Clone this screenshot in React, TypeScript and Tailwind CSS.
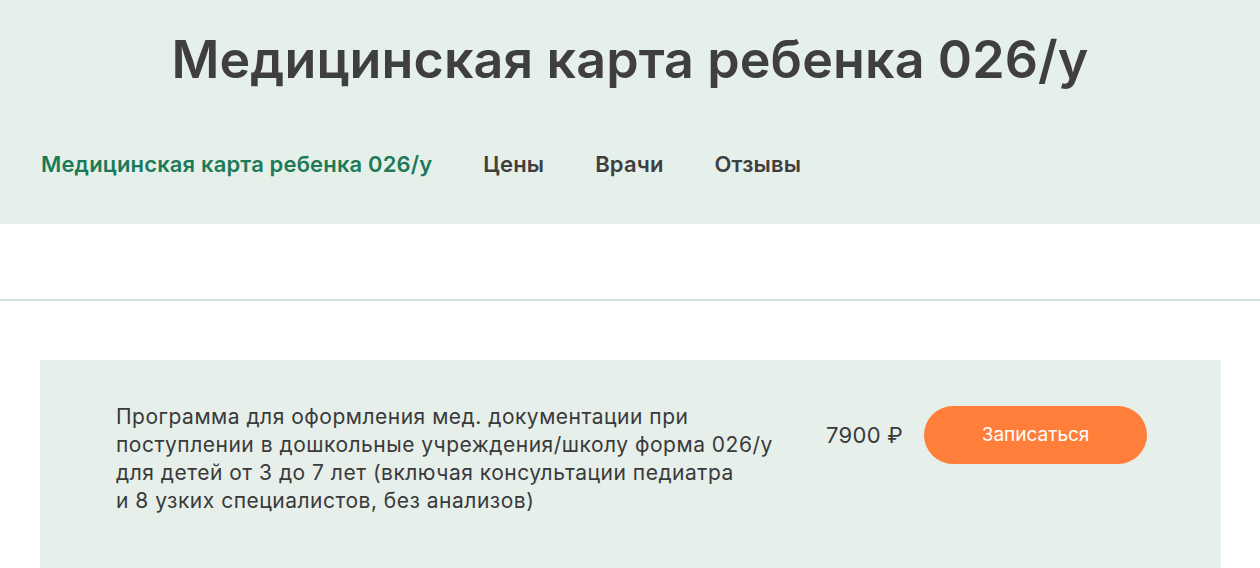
import React from "react";

export default function App() {
  return (
    <div className="w-full bg-white" style={{ fontFamily: "Inter, 'Noto Sans', sans-serif" }}>
      <header className="bg-[#e6f0eb] h-[224px] flex flex-col">
        <h1 className="pt-[28px] text-center text-[52px] leading-[64px] font-semibold text-[#3f3f3f] tracking-[0.1px]">
          Медицинская карта ребенка 026/у
        </h1>
        <nav className="mt-[57px] pl-[41px] flex items-center gap-[51px] text-[22px] leading-[30px] font-semibold tracking-[0.15px]">
          <a className="text-[#1d7a58]">Медицинская карта ребенка 026/у</a>
          <a className="text-[#3f3f3f]">Цены</a>
          <a className="text-[#3f3f3f]">Врачи</a>
          <a className="text-[#3f3f3f]">Отзывы</a>
        </nav>
      </header>
      <div className="h-[75px]" />
      <div className="h-[2px] bg-[#d3e3dc]" />
      <div className="pt-[59px] pl-[40px] pr-[39px]">
        <div className="bg-[#e6efea] h-[209px] flex items-start pl-[76px] pt-[43px]">
          <p className="w-[690px] text-[21px] leading-[28px] tracking-[0.5px] text-[#3a3a3a]">
            Программа для оформления мед. документации при
            <br />
            поступлении в дошкольные учреждения/школу форма 026/у
            <br />
            для детей от 3 до 7 лет (включая консультации педиатра
            <br />
            и 8 узких специалистов, без анализов)
          </p>
          <div className="flex items-center mt-[3px] ml-[20px]">
            <span className="text-[22px] tracking-[0.3px] text-[#3a3a3a] whitespace-nowrap">7900 ₽</span>
            <button className="ml-[21px] w-[223px] h-[58px] rounded-full bg-[#ff7f3a] text-white text-[19px]">
              Записаться
            </button>
          </div>
        </div>
      </div>
    </div>
  );
}
